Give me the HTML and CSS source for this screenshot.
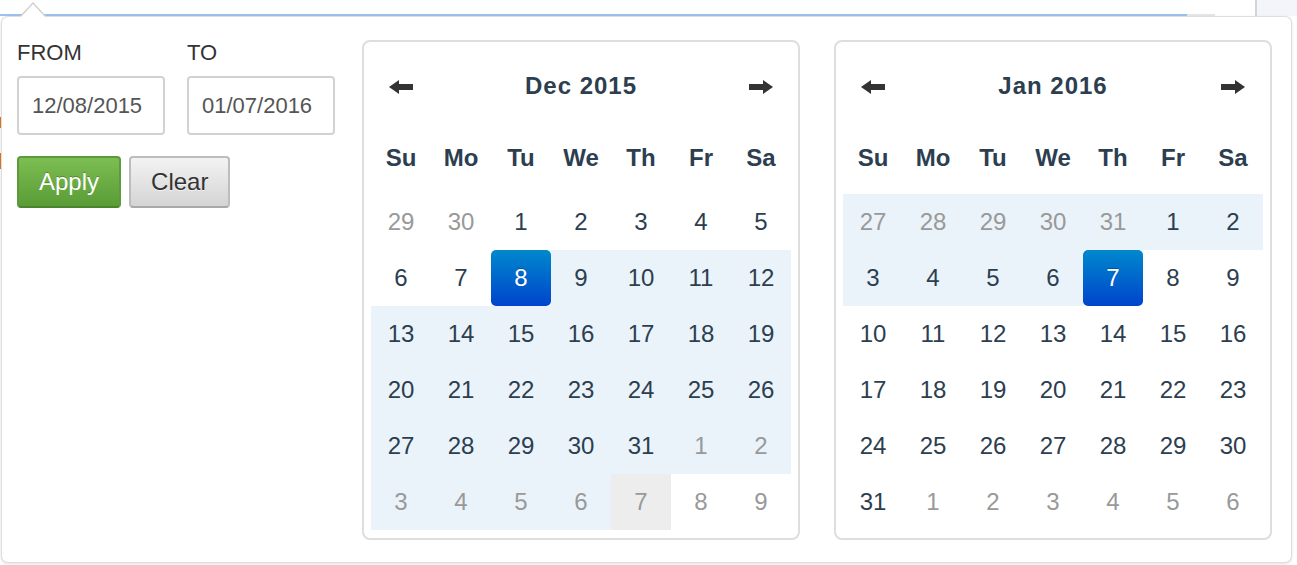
FILE: index.html
```html
<!DOCTYPE html>
<html lang="en">
<head>
<meta charset="utf-8">
<title>Date range picker</title>
<link rel="stylesheet" href="styles.css">
</head>
<body>
<div class="page">
  <div class="topbar">
    <div class="topline"></div>
    <div class="topline-rest"></div>
    <div class="side-panel"></div>
  </div>
  <div class="edge">
    <span class="edge-mark mark-1"></span>
    <span class="edge-mark mark-2"></span>
  </div>
</div>

<div class="popup">
  <div class="controls">
    <div class="fields">
      <label class="field">
        <span class="field-label">FROM</span>
        <input class="date-input" type="text" value="12/08/2015">
      </label>
      <label class="field">
        <span class="field-label">TO</span>
        <input class="date-input" type="text" value="01/07/2016">
      </label>
    </div>
    <div class="actions">
      <button class="btn btn-apply" type="button">Apply</button>
      <button class="btn btn-clear" type="button">Clear</button>
    </div>
  </div>

  <div class="cal">
    <div class="cal-head">
      <span class="nav"><svg width="24" height="14" viewBox="0 0 24 14"><path d="M0 7 L10 0 L10 4 L24 4 L24 10 L10 10 L10 14 Z"/></svg></span>
      <span class="cal-title">Dec 2015</span>
      <span class="nav"><svg width="24" height="14" viewBox="0 0 24 14"><path d="M24 7 L14 0 L14 4 L0 4 L0 10 L14 10 L14 14 Z"/></svg></span>
    </div>
    <div class="cal-dow">
      <span>Su</span><span>Mo</span><span>Tu</span><span>We</span><span>Th</span><span>Fr</span><span>Sa</span>
    </div>
    <div class="cal-days">
      <span class="day muted">29</span><span class="day muted">30</span><span class="day">1</span><span class="day">2</span><span class="day">3</span><span class="day">4</span><span class="day">5</span>
      <span class="day">6</span><span class="day">7</span><span class="day active">8</span><span class="day range">9</span><span class="day range">10</span><span class="day range">11</span><span class="day range">12</span>
      <span class="day range">13</span><span class="day range">14</span><span class="day range">15</span><span class="day range">16</span><span class="day range">17</span><span class="day range">18</span><span class="day range">19</span>
      <span class="day range">20</span><span class="day range">21</span><span class="day range">22</span><span class="day range">23</span><span class="day range">24</span><span class="day range">25</span><span class="day range">26</span>
      <span class="day range">27</span><span class="day range">28</span><span class="day range">29</span><span class="day range">30</span><span class="day range">31</span><span class="day range muted">1</span><span class="day range muted">2</span>
      <span class="day range muted">3</span><span class="day range muted">4</span><span class="day range muted">5</span><span class="day range muted">6</span><span class="day today muted">7</span><span class="day muted">8</span><span class="day muted">9</span>
    </div>
  </div>

  <div class="cal">
    <div class="cal-head">
      <span class="nav"><svg width="24" height="14" viewBox="0 0 24 14"><path d="M0 7 L10 0 L10 4 L24 4 L24 10 L10 10 L10 14 Z"/></svg></span>
      <span class="cal-title">Jan 2016</span>
      <span class="nav"><svg width="24" height="14" viewBox="0 0 24 14"><path d="M24 7 L14 0 L14 4 L0 4 L0 10 L14 10 L14 14 Z"/></svg></span>
    </div>
    <div class="cal-dow">
      <span>Su</span><span>Mo</span><span>Tu</span><span>We</span><span>Th</span><span>Fr</span><span>Sa</span>
    </div>
    <div class="cal-days">
      <span class="day range muted">27</span><span class="day range muted">28</span><span class="day range muted">29</span><span class="day range muted">30</span><span class="day range muted">31</span><span class="day range">1</span><span class="day range">2</span>
      <span class="day range">3</span><span class="day range">4</span><span class="day range">5</span><span class="day range">6</span><span class="day active">7</span><span class="day">8</span><span class="day">9</span>
      <span class="day">10</span><span class="day">11</span><span class="day">12</span><span class="day">13</span><span class="day">14</span><span class="day">15</span><span class="day">16</span>
      <span class="day">17</span><span class="day">18</span><span class="day">19</span><span class="day">20</span><span class="day">21</span><span class="day">22</span><span class="day">23</span>
      <span class="day">24</span><span class="day">25</span><span class="day">26</span><span class="day">27</span><span class="day">28</span><span class="day">29</span><span class="day">30</span>
      <span class="day">31</span><span class="day muted">1</span><span class="day muted">2</span><span class="day muted">3</span><span class="day muted">4</span><span class="day muted">5</span><span class="day muted">6</span>
    </div>
  </div>
</div>
</body>
</html>
```

FILE: styles.css
```css
* {
  box-sizing: border-box;
}

html, body {
  margin: 0;
  padding: 0;
  background: #ffffff;
  font-family: "Liberation Sans", Arial, sans-serif;
}

body {
  width: 1297px;
  height: 565px;
  overflow: hidden;
  position: relative;
}

/* ---------- underlying page ---------- */
.page {
  display: flex;
  flex-direction: column;
}

.topbar {
  display: flex;
  height: 16px;
  align-items: flex-end;
}

.topline {
  width: 1187px;
  height: 2px;
  background: #9cc3ed;
}

.topline-rest {
  width: 28px;
  height: 2px;
  background: #e6e6e6;
}

.side-panel {
  margin-left: 40px;
  flex: 1;
  height: 16px;
  background: #f4f5fb;
  border-left: 2px solid #d4d4d4;
}

.edge {
  display: flex;
  flex-direction: column;
  width: 2px;
}

.edge-mark {
  display: block;
  width: 2px;
  background: #e07a1f;
}

.mark-1 {
  margin-top: 101px;
  height: 11px;
}

.mark-2 {
  margin-top: 25px;
  height: 16px;
}

/* ---------- popup ---------- */
.popup {
  position: absolute;
  left: 1px;
  top: 16px;
  width: 1291px;
  height: 547px;
  display: flex;
  align-items: flex-start;
  padding: 23px 19px 22px 0;
  background: #ffffff;
  border: 1px solid rgba(0, 0, 0, 0.13);
  border-radius: 7px;
  box-shadow: 0 1px 3px rgba(0, 0, 0, 0.12);
}

.popup::before {
  content: "";
  position: absolute;
  top: -15px;
  left: 18px;
  border-left: 13px solid transparent;
  border-right: 13px solid transparent;
  border-bottom: 14px solid #cfcfcf;
}

.popup::after {
  content: "";
  position: absolute;
  top: -13px;
  left: 19px;
  border-left: 12px solid transparent;
  border-right: 12px solid transparent;
  border-bottom: 13px solid #ffffff;
}

/* ---------- controls ---------- */
.controls {
  flex: 0 0 360px;
  padding-left: 15px;
  display: flex;
  flex-direction: column;
}

.fields {
  display: flex;
  gap: 22px;
}

.field {
  display: flex;
  flex-direction: column;
}

.field-label {
  font-size: 22px;
  line-height: 25px;
  color: #333333;
  margin-bottom: 11px;
}

.date-input {
  width: 148px;
  height: 59px;
  padding: 0 13px;
  border: 2px solid #d2d2d2;
  border-radius: 4px;
  font-family: "Liberation Sans", Arial, sans-serif;
  font-size: 22px;
  color: #555555;
  background: #ffffff;
  outline: none;
}

.actions {
  display: flex;
  gap: 8px;
  margin-top: 21px;
}

.btn {
  height: 52px;
  padding: 0 20px;
  font-family: "Liberation Sans", Arial, sans-serif;
  font-size: 24px;
  line-height: 28px;
  border-radius: 4px;
  border: 2px solid;
  cursor: pointer;
}

.btn-apply {
  color: #ffffff;
  background: linear-gradient(to bottom, #7cbe52, #5a9c36);
  border-color: #5d9a3c #5d9a3c #4a842b;
  text-shadow: 0 -1px 0 rgba(0, 0, 0, 0.25);
}

.btn-clear {
  color: #333333;
  background: linear-gradient(to bottom, #f3f3f3, #d4d4d4);
  border-color: #bdbdbd #bdbdbd #a9a9a9;
  text-shadow: 0 1px 0 rgba(255, 255, 255, 0.6);
}

/* ---------- calendars ---------- */
.cal {
  flex: 0 0 438px;
  height: 500px;
  padding: 16px 7px 8px;
  border: 2px solid #dedede;
  border-radius: 8px;
  display: flex;
  flex-direction: column;
  color: #2c3e50;
}

.cal + .cal {
  margin-left: 34px;
}

.cal-head,
.cal-dow,
.cal-days {
  display: grid;
  grid-template-columns: repeat(7, 60px);
  grid-auto-rows: 56px;
}

.cal-head {
  margin-bottom: 16px;
}

.cal-dow {
  margin-bottom: 8px;
}

.nav {
  display: flex;
  align-items: center;
  justify-content: center;
}

.nav svg {
  fill: #333333;
  margin-top: 2px;
}

.cal-title {
  grid-column: 2 / 7;
  text-align: center;
  font-size: 24px;
  font-weight: bold;
  line-height: 56px;
  letter-spacing: 1px;
}

.cal-dow span {
  text-align: center;
  font-size: 24px;
  font-weight: bold;
  line-height: 56px;
}

.day {
  text-align: center;
  font-size: 24px;
  line-height: 56px;
}

.day.range {
  background: #eaf3f9;
}

.day.muted {
  color: #999999;
}

.day.today {
  background: #ededed;
}

.day.active {
  color: #ffffff;
  background: linear-gradient(to bottom, #0088cc, #0044cc);
  border-radius: 5px;
  text-shadow: 0 -1px 0 rgba(0, 0, 0, 0.25);
}
```
